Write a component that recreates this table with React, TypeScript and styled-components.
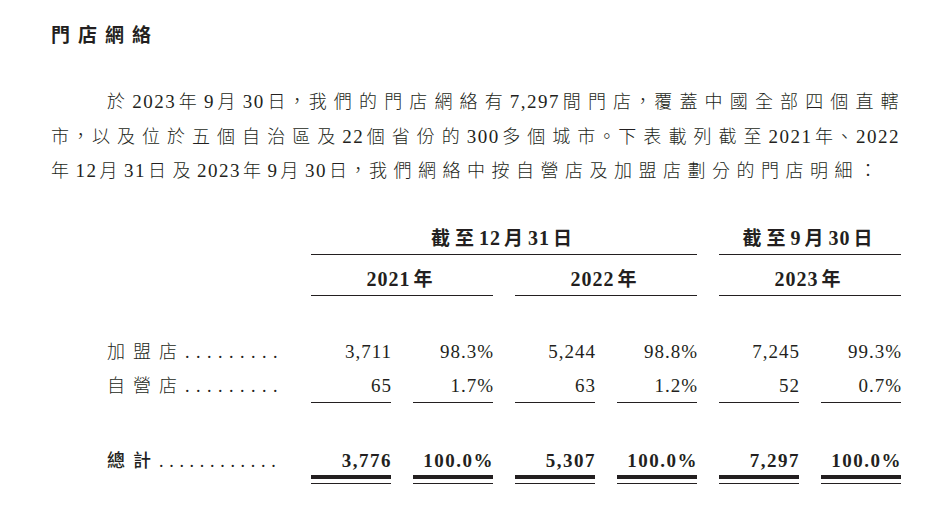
import React from 'react';
import styled, { createGlobalStyle } from 'styled-components';

const Global = createGlobalStyle`
  html, body { margin: 0; padding: 0; background: #ffffff; }
  body {
    font-family: "Liberation Serif", "Noto Sans CJK TC", serif;
    color: #231f20;
  }
`;

const Page = styled.div`
  width: 945px;
  height: 518px;
  box-sizing: border-box;
  padding: 24px 46px 0 51px;
  overflow: hidden;
`;

const Title = styled.h1`
  margin: 0;
  font-family: "Noto Sans CJK TC", sans-serif;
  font-weight: 700;
  font-size: 19px;
  line-height: 20px;
  letter-spacing: 8px;
`;

const Para = styled.div`
  margin-top: 41px;
  font-size: 18px;
  line-height: 34.5px;
  font-weight: 300;
`;

const Line = styled.div<{ $justify?: boolean; $indent?: number; $mr?: number }>`
  white-space: nowrap;
  letter-spacing: 6.5px;
  text-indent: ${p => p.$indent ?? 0}px;
  margin-right: ${p => p.$mr ?? 0}px;
  text-align: ${p => (p.$justify ? 'justify' : 'left')};
  text-align-last: ${p => (p.$justify ? 'justify' : 'left')};
`;

const N = styled.span`
  font-size: 19px;
  line-height: 20px;
  letter-spacing: 1.5px;
  font-weight: 400;
  margin-right: 2px;
`;

const P = styled.span`
  font-feature-settings: "halt";
`;

const Row = styled.div<{ $mt?: number }>`
  display: grid;
  grid-template-columns: 238px repeat(6, 80px);
  column-gap: 22px;
  margin-top: ${p => p.$mt ?? 0}px;
`;

const Blank = styled.div``;

const HeadCell = styled.div<{ $span: number; $pt?: number }>`
  grid-column: span ${p => p.$span};
  text-align: center;
  font-weight: 700;
  font-size: 19px;
  line-height: 20px;
  letter-spacing: 5px;
  padding-top: ${p => p.$pt ?? 0}px;
  padding-bottom: 5px;
  border-bottom: 1px solid #231f20;
`;

const HN = styled.span`
  font-size: 20px;
  letter-spacing: 1px;
  margin-right: 3px;
`;

const Label = styled.div<{ $bold?: boolean }>`
  padding-left: 56px;
  font-size: 18px;
  line-height: 20px;
  letter-spacing: 8px;
  font-weight: ${p => (p.$bold ? 500 : 300)};
  white-space: nowrap;
`;

const Dots = styled.span<{ $gap: number }>`
  font-family: "Liberation Serif", serif;
  font-weight: 400;
  letter-spacing: ${p => p.$gap}px;
`;

const NumCell = styled.div<{ $bold?: boolean; $rule?: boolean }>`
  display: flex;
  flex-direction: column;
  text-align: right;
  font-size: 19px;
  line-height: 20px;
  letter-spacing: ${p => (p.$bold ? 1.5 : 1)}px;
  font-weight: ${p => (p.$bold ? 700 : 400)};
  padding-bottom: ${p => (p.$rule ? 6 : 0)}px;
  border-bottom: ${p => (p.$rule ? '1px solid #231f20' : 'none')};
`;

const Value = styled.span`
  margin-right: -1px;
`;

const ThickRule = styled.div`
  height: 4px;
  margin-top: 4px;
  background: #231f20;
`;

const ThinRule = styled.div`
  height: 1px;
  margin-top: 4px;
  background: #231f20;
`;

type DataRow = { label: string; dots: string; values: string[] };

const rows: DataRow[] = [
  { label: '加盟店', dots: '.........', values: ['3,711', '98.3%', '5,244', '98.8%', '7,245', '99.3%'] },
  { label: '自營店', dots: '.........', values: ['65', '1.7%', '63', '1.2%', '52', '0.7%'] },
];

const totals = ['3,776', '100.0%', '5,307', '100.0%', '7,297', '100.0%'];

export default function App() {
  return (
    <>
      <Global />
      <Page>
        <Title>門店網絡</Title>
        <Para>
          <Line $justify $indent={56} $mr={-6}>
            於<N>2023</N>年<N>9</N>月<N>30</N>日<P>，</P>我們的門店網絡有<N>7,297</N>間門店<P>，</P>覆蓋中國全部四個直轄
          </Line>
          <Line $justify $mr={-3}>
            市<P>，</P>以及位於五個自治區及<N>22</N>個省份的<N>300</N>多個城市<P>。</P>下表載列截至<N>2021</N>年<P>、</P><N>2022</N>
          </Line>
          <Line>
            年<N>12</N>月<N>31</N>日及<N>2023</N>年<N>9</N>月<N>30</N>日<P>，</P>我們網絡中按自營店及加盟店劃分的門店明細：
          </Line>
        </Para>

        <Row $mt={39}>
          <Blank />
          <HeadCell $span={4}>截至<HN>12</HN>月<HN>31</HN>日</HeadCell>
          <HeadCell $span={2}>截至<HN>9</HN>月<HN>30</HN>日</HeadCell>
        </Row>
        <Row>
          <Blank />
          <HeadCell $span={2} $pt={14}><HN>2021</HN>年</HeadCell>
          <HeadCell $span={2} $pt={14}><HN>2022</HN>年</HeadCell>
          <HeadCell $span={2} $pt={14}><HN>2023</HN>年</HeadCell>
        </Row>

        {rows.map((r, i) => (
          <Row key={r.label} $mt={i === 0 ? 46 : 14}>
            <Label>
              {r.label}
              <Dots $gap={6.5}>{r.dots}</Dots>
            </Label>
            {r.values.map((v, j) => (
              <NumCell key={j} $rule={i === rows.length - 1}>
                <Value>{v}</Value>
              </NumCell>
            ))}
          </Row>
        ))}

        <Row $mt={48}>
          <Label $bold>
            總計<Dots $gap={5.7}>............</Dots>
          </Label>
          {totals.map((v, j) => (
            <NumCell key={j} $bold>
              <Value>{v}</Value>
              <ThickRule />
              <ThinRule />
            </NumCell>
          ))}
        </Row>
      </Page>
    </>
  );
}
